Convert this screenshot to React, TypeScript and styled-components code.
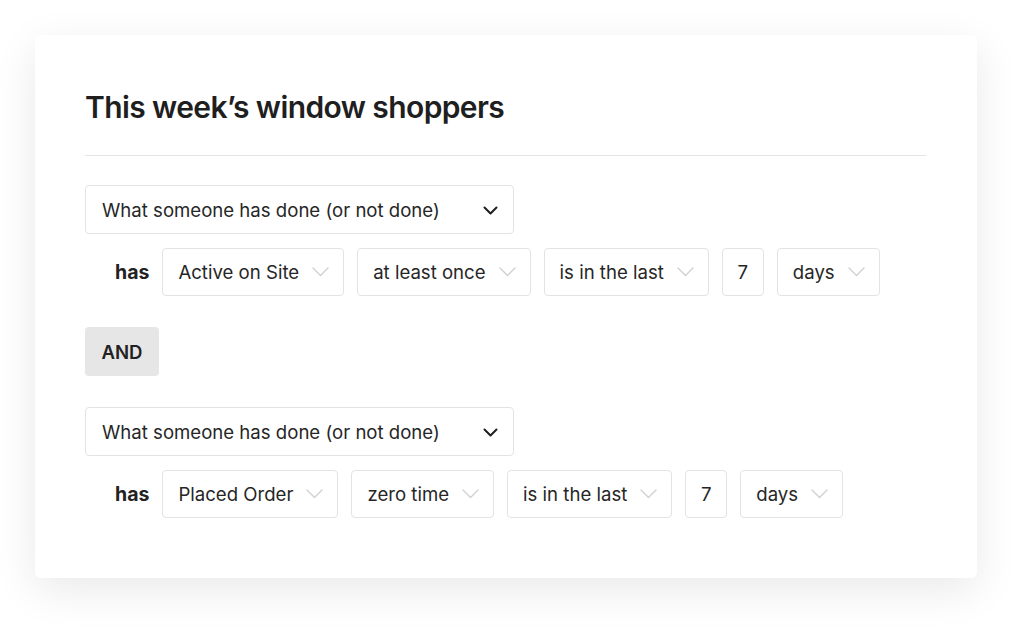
import React from "react";
import styled, { createGlobalStyle } from "styled-components";

const GlobalStyle = createGlobalStyle`
  html, body {
    margin: 0;
    padding: 0;
    background: #ffffff;
  }
  body {
    font-family: Inter, "Open Sans", Arial, sans-serif;
    color: #1f1f1f;
  }
`;

const Page = styled.div`
  padding: 35px;
  width: 1032px;
  height: 634px;
  box-sizing: border-box;
`;

const Card = styled.div`
  width: 942px;
  height: 543px;
  box-sizing: border-box;
  background: #ffffff;
  border-radius: 6px;
  box-shadow: 0 12px 44px rgba(0, 0, 0, 0.09);
  padding: 54px 51px 0 50px;
`;

const Title = styled.h1`
  margin: 0;
  font-size: 30px;
  line-height: 36px;
  font-weight: 600;
  letter-spacing: -0.6px;
  color: #1f1f1f;
`;

const Divider = styled.hr`
  margin: 30px 0 29px;
  border: none;
  border-top: 1px solid #e4e4e4;
`;

const Group = styled.div`
  display: flex;
  flex-direction: column;
  gap: 14px;
`;

const MainSelect = styled.div`
  display: flex;
  align-items: center;
  justify-content: space-between;
  width: 429px;
  height: 49px;
  box-sizing: border-box;
  padding: 1px 15px 0 16px;
  border: 1px solid #e3e3e3;
  border-radius: 4px;
  font-size: 18.6px;
  color: #262626;
`;

const Row = styled.div`
  display: flex;
  align-items: center;
  gap: 13px;
`;

const HasLabel = styled.span`
  margin-left: 30px;
  font-size: 19.5px;
  font-weight: 700;
  color: #222;
`;

const Pill = styled.div<{ $center?: boolean }>`
  display: flex;
  align-items: center;
  justify-content: ${(p) => (p.$center ? "center" : "flex-start")};
  gap: 13px;
  height: 48px;
  box-sizing: border-box;
  padding: ${(p) => (p.$center ? "0" : "0 14px 0 15px")};
  min-width: ${(p) => (p.$center ? "42px" : "0")};
  border: 1px solid #e3e3e3;
  border-radius: 4px;
  font-size: 18.6px;
  color: #262626;
`;

const AndButton = styled.div`
  display: flex;
  align-items: center;
  justify-content: center;
  width: 74px;
  height: 49px;
  margin: 31px 0;
  border-radius: 4px;
  background: #e6e6e6;
  font-size: 18.6px;
  font-weight: 600;
  color: #222;
`;

const Chevron = ({ dark }: { dark?: boolean }) =>
  dark ? (
    <svg width="15" height="9" viewBox="0 0 15 9" fill="none">
      <path d="M1.5 1.5 L7.5 7.5 L13.5 1.5" stroke="#1f1f1f" strokeWidth="2" strokeLinecap="round" strokeLinejoin="round" />
    </svg>
  ) : (
    <svg width="17" height="10" viewBox="0 0 17 10" fill="none">
      <path d="M1 1 L8.5 8.5 L16 1" stroke="#d0d0d0" strokeWidth="1.4" strokeLinecap="round" strokeLinejoin="round" />
    </svg>
  );

interface ICondition {
  event: string;
  frequency: string;
  range: string;
  amount: string;
  unit: string;
}

const conditions: ICondition[] = [
  { event: "Active on Site", frequency: "at least once", range: "is in the last", amount: "7", unit: "days" },
  { event: "Placed Order", frequency: "zero time", range: "is in the last", amount: "7", unit: "days" },
];

const ConditionBlock = ({ item }: { item: ICondition }) => (
  <Group>
    <MainSelect>
      What someone has done (or not done)
      <Chevron dark />
    </MainSelect>
    <Row>
      <HasLabel>has</HasLabel>
      <Pill>
        {item.event}
        <Chevron />
      </Pill>
      <Pill>
        {item.frequency}
        <Chevron />
      </Pill>
      <Pill>
        {item.range}
        <Chevron />
      </Pill>
      <Pill $center>{item.amount}</Pill>
      <Pill>
        {item.unit}
        <Chevron />
      </Pill>
    </Row>
  </Group>
);

export default function App() {
  return (
    <>
      <GlobalStyle />
      <Page>
        <Card>
          <Title>This week’s window shoppers</Title>
          <Divider />
          <ConditionBlock item={conditions[0]} />
          <AndButton>AND</AndButton>
          <ConditionBlock item={conditions[1]} />
        </Card>
      </Page>
    </>
  );
}
